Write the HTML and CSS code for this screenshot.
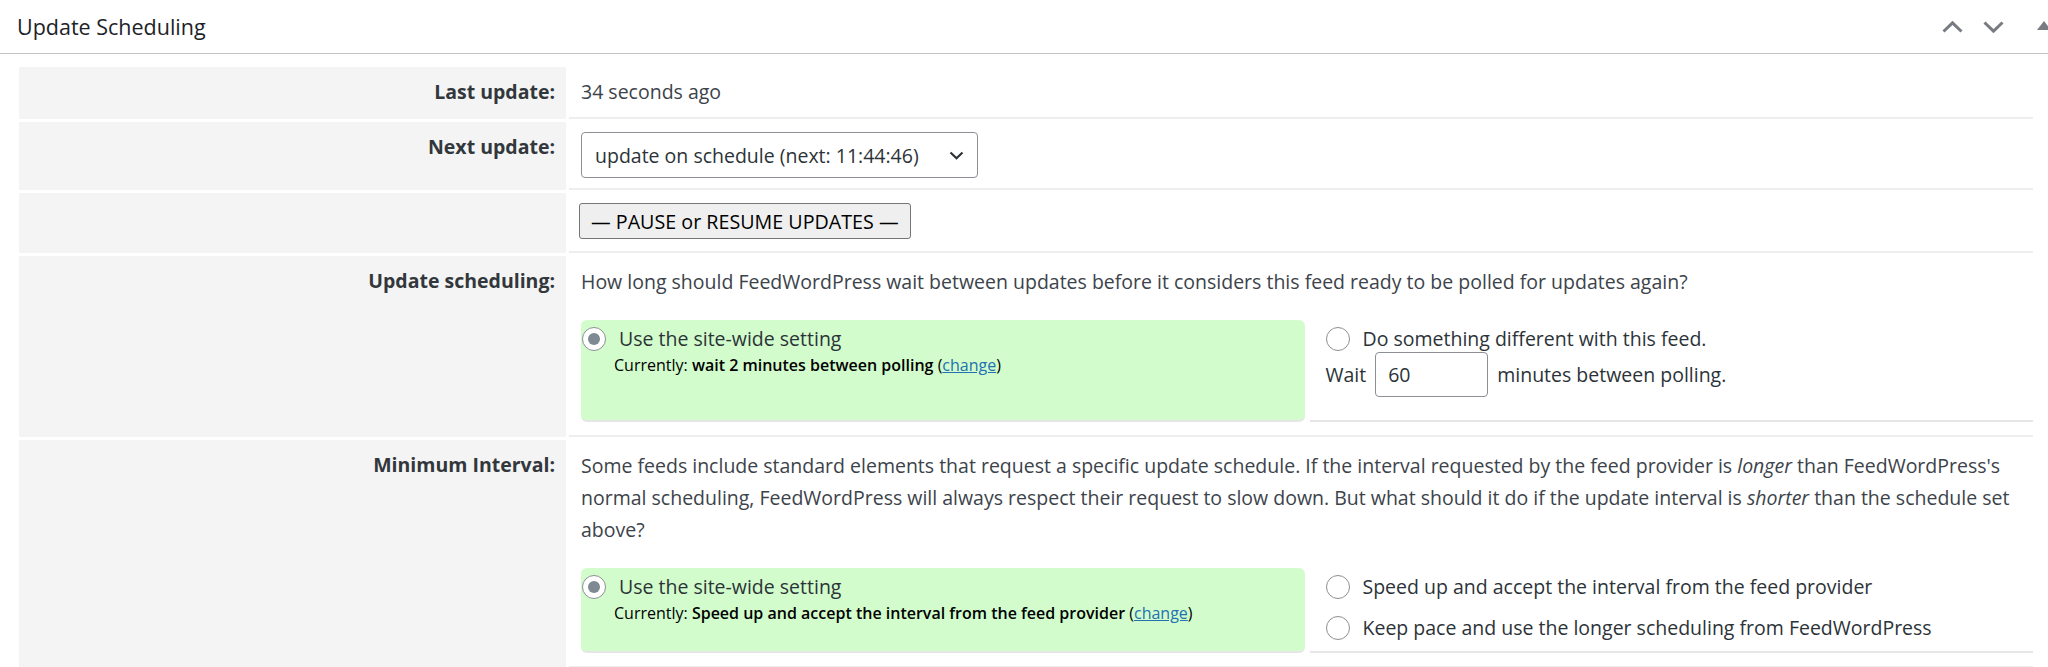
FILE: index.html
```html
<!DOCTYPE html>
<html lang="en">

<head>
    <meta charset="UTF-8">
    <meta name="viewport" content="width=device-width, initial-scale=1.0">
    <title>Update Scheduling</title>
    <link rel="stylesheet" href="styles.css">
</head>

<body>
    <div class="postbox">
        <div class="postbox-header">
            <h2 class="hndle">Update Scheduling</h2>
            <div class="handle-actions">
                <button type="button" class="handle-order up" aria-label="Move up">
                    <svg width="21" height="12" viewBox="0 0 21 12"><path d="M1.5 10.5 L10.5 1.8 L19.5 10.5" fill="none" stroke="currentColor" stroke-width="3"/></svg>
                </button>
                <button type="button" class="handle-order down" aria-label="Move down">
                    <svg width="21" height="12" viewBox="0 0 21 12"><path d="M1.5 1.5 L10.5 10.2 L19.5 1.5" fill="none" stroke="currentColor" stroke-width="3"/></svg>
                </button>
                <button type="button" class="handle-toggle" aria-label="Toggle panel">
                    <svg width="14" height="9" viewBox="0 0 14 9"><polygon points="0,9 7,0 14,9" fill="currentColor"/></svg>
                </button>
            </div>
        </div>

        <div class="inside">
            <table class="edit-form">
                <tr>
                    <th>Last update:</th>
                    <td>34 seconds ago</td>
                </tr>
                <tr>
                    <th>Next update:</th>
                    <td>
                        <span class="select-wrap">
                            <select name="update_schedule">
                                <option>update on schedule (next: 11:44:46)</option>
                                <option>update ASAP</option>
                                <option>don't update</option>
                            </select>
                            <svg class="select-arrow" width="15" height="9" viewBox="0 0 15 9"><path d="M1.5 1.5 L7.5 7.2 L13.5 1.5" fill="none" stroke="currentColor" stroke-width="2.2"/></svg>
                        </span>
                    </td>
                </tr>
                <tr>
                    <th></th>
                    <td><button type="button" class="pause-button">&mdash; PAUSE or RESUME UPDATES &mdash;</button></td>
                </tr>
                <tr>
                    <th>Update scheduling:</th>
                    <td>
                        <p class="question">How long should FeedWordPress wait between updates before it considers this feed ready to be polled for updates again?</p>
                        <div class="setting-options">
                            <div class="option-site">
                                <label class="choice"><input type="radio" name="update_window" checked> Use the site-wide setting</label>
                                <div class="current">Currently: <strong>wait 2 minutes between polling</strong> (<a href="#">change</a>)</div>
                            </div>
                            <div class="option-local">
                                <label class="choice"><input type="radio" name="update_window"> Do something different with this feed.</label>
                                <div class="wait-line">Wait <input type="text" class="minutes" value="60"> minutes between polling.</div>
                            </div>
                        </div>
                    </td>
                </tr>
                <tr>
                    <th>Minimum Interval:</th>
                    <td>
                        <p class="question">Some feeds include standard elements that request a specific update schedule. If the interval requested by the feed provider is <em>longer</em> than FeedWordPress's normal scheduling, FeedWordPress will always respect their request to slow down. But what should it do if the update interval is <em>shorter</em> than the schedule set above?</p>
                        <div class="setting-options">
                            <div class="option-site">
                                <label class="choice"><input type="radio" name="min_interval" checked> Use the site-wide setting</label>
                                <div class="current">Currently: <strong>Speed up and accept the interval from the feed provider</strong> (<a href="#">change</a>)</div>
                            </div>
                            <div class="option-local">
                                <label class="choice"><input type="radio" name="min_interval"> Speed up and accept the interval from the feed provider</label>
                                <label class="choice"><input type="radio" name="min_interval"> Keep pace and use the longer scheduling from FeedWordPress</label>
                            </div>
                        </div>
                    </td>
                </tr>
            </table>
        </div>
    </div>
</body>

</html>
```

FILE: styles.css
```css
body {
    margin: 0;
    font-family: "Open Sans", "Noto Sans", sans-serif;
    font-size: 19.5px;
    color: #3c434a;
    background-color: #fff;
    overflow: hidden;
}

/* panel header */
.postbox-header {
    display: flex;
    justify-content: space-between;
    align-items: center;
    height: 53px;
    border-bottom: 1px solid #c3c4c7;
}

.hndle {
    margin: 0;
    padding-left: 17px;
    font-size: 21.5px;
    font-weight: 400;
    color: #1d2327;
}

.handle-actions {
    display: flex;
    align-items: center;
    margin-right: -3px;
}

.handle-actions button {
    display: flex;
    padding: 0;
    border: none;
    background: none;
    color: #787c82;
    cursor: pointer;
}

.handle-order.up {
    margin-right: 20px;
}

.handle-order.down {
    margin-right: 33px;
}

.handle-toggle {
    margin-top: -3px;
}

/* form table */
.inside {
    padding: 10px 12px 0 16px;
}

.edit-form {
    width: 100%;
    border-spacing: 3px;
}

.edit-form th {
    box-sizing: border-box;
    width: 547px;
    padding: 10px 11px 10px 10px;
    background-color: #f4f4f4;
    text-align: right;
    vertical-align: top;
    line-height: 30px;
    font-weight: 700;
    color: #32373c;
}

.edit-form td {
    padding: 10px 0 10px 12px;
    vertical-align: top;
    line-height: 30px;
    border-bottom: 2px solid #eeeeee;
}

.select-wrap {
    position: relative;
    display: inline-block;
    vertical-align: top;
}

.select-wrap select {
    display: block;
    width: 397px;
    height: 46px;
    padding: 0 40px 0 13px;
    border: 1px solid #8c8f94;
    border-radius: 4px;
    background-color: #fff;
    font-family: inherit;
    font-size: 19.5px;
    color: #2c3338;
    appearance: none;
}

.select-arrow {
    position: absolute;
    right: 14px;
    top: 19px;
    color: #2c3338;
    pointer-events: none;
}

.pause-button {
    display: block;
    height: 36px;
    margin: 0 0 2px -2px;
    padding: 0 11px;
    border: 1px solid #767676;
    border-radius: 3px;
    background-color: #efefef;
    font-family: inherit;
    font-size: 19.7px;
    color: #000;
}

.question {
    margin: 0;
    line-height: 32px;
}

/* site-wide vs. feed setting boxes */
.setting-options {
    display: grid;
    grid-template-columns: 1fr 1fr;
    gap: 5px;
    margin: 22px 0 3px;
}

.option-site,
.option-local {
    border-bottom: 2px solid #e6e6e6;
}

.option-site {
    padding: 3px 0 0 1px;
    background-color: #d2fccc;
    border-radius: 6px;
}

.option-local {
    padding: 3px 0 7px 16px;
}

.option-local .choice + .choice {
    margin-top: 9px;
}

.choice {
    display: flex;
    align-items: center;
    gap: 13px;
    line-height: 32px;
    color: #2c3338;
}

.choice input {
    appearance: none;
    position: relative;
    width: 24px;
    height: 24px;
    margin: 0;
    border: 1px solid #8c8f94;
    border-radius: 50%;
    background-color: #fff;
    box-sizing: border-box;
}

.choice input:checked::before {
    content: "";
    position: absolute;
    top: 5px;
    left: 5px;
    width: 12px;
    height: 12px;
    border-radius: 50%;
    background-color: #7e8993;
}

.current {
    margin-left: 32px;
    font-size: 16px;
    line-height: 20px;
    color: #000;
}

.current strong {
    font-weight: 600;
}

.current a {
    color: #2271b1;
}

.wait-line {
    display: flex;
    align-items: center;
    gap: 9px;
    margin: -3px 0 16px;
    color: #2c3338;
}

.minutes {
    box-sizing: border-box;
    width: 113px;
    height: 45px;
    padding: 0 12px;
    border: 1px solid #8c8f94;
    border-radius: 4px;
    font-family: inherit;
    font-size: 19.5px;
    color: #2c3338;
}
```
